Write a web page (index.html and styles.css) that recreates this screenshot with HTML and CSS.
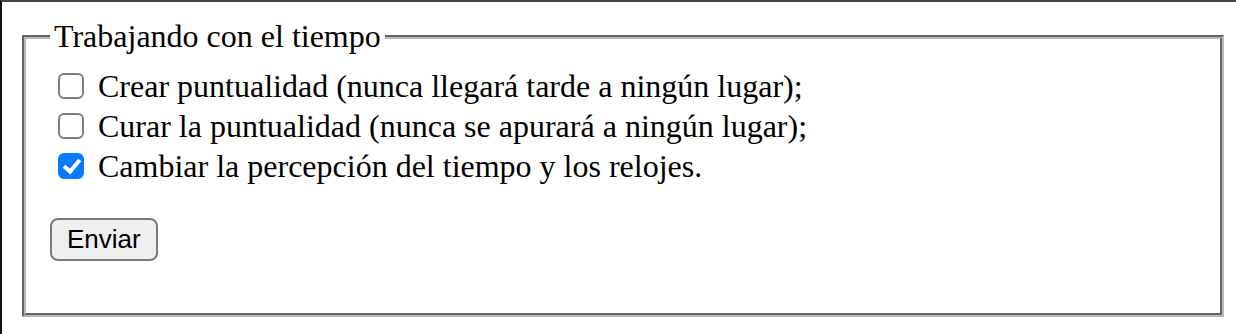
FILE: index.html
```html
<!DOCTYPE html>
<html lang="es">
<head>
<meta charset="utf-8">
<title>Trabajando con el tiempo</title>
<link rel="stylesheet" href="styles.css">
</head>
<body>
<div class="frame">
  <form class="form">
    <fieldset class="group">
      <legend class="group-title">Trabajando con el tiempo</legend>
      <label class="option"><input class="check" type="checkbox" name="t1"> <span class="option-text">Crear puntualidad (nunca llegará tarde a ningún lugar);</span></label>
      <label class="option"><input class="check" type="checkbox" name="t2"> <span class="option-text">Curar la puntualidad (nunca se apurará a ningún lugar);</span></label>
      <label class="option"><input class="check" type="checkbox" name="t3" checked> <span class="option-text">Cambiar la percepción del tiempo y los relojes.</span></label>
      <button class="submit" type="submit">Enviar</button>
    </fieldset>
  </form>
</div>
</body>
</html>
```
FILE: styles.css
```css
html, body {
  margin: 0;
  padding: 0;
  background: #fff;
}

.frame {
  box-sizing: border-box;
  width: 1236px;
  height: 334px;
  border-top: 2px solid #444;
  border-left: 2px solid #111;
  padding: 16px 0 0 20px;
  overflow: hidden;
}

.form {
  margin: 0;
}

.group {
  box-sizing: border-box;
  width: 1202px;
  margin: 0;
  padding: 11px 24px 52px 24px;
  border: 4px groove #b8b8b8;
  font-family: "Liberation Serif", "Times New Roman", serif;
  font-size: 32px;
  color: #000;
}

.group-title {
  padding: 0 4px;
  font-size: 32px;
}

.option {
  display: flex;
  align-items: center;
  height: 40px;
  line-height: 40px;
  white-space: pre;
}

.check {
  appearance: none;
  -webkit-appearance: none;
  position: relative;
  box-sizing: border-box;
  width: 26px;
  height: 26px;
  margin: 0 6px 0 8px;
  border: 2px solid #7d7d7d;
  border-radius: 6px;
  background: #fff;
  flex: none;
}

.check:checked {
  border-color: #0a7bff;
  background: #0a7bff;
}

.check:checked::after {
  content: "";
  position: absolute;
  left: 7px;
  top: 1px;
  width: 6px;
  height: 13px;
  border-right: 4px solid #fff;
  border-bottom: 4px solid #fff;
  transform: rotate(40deg);
}

.option-text {
  margin-left: 8px;
}

.submit {
  display: block;
  box-sizing: border-box;
  height: 43px;
  margin: 32px 0 0 0;
  padding: 0 15px;
  border: 2px solid #7a7a7a;
  border-radius: 8px;
  background: #efefef;
  font-family: "Liberation Sans", Arial, sans-serif;
  font-size: 26px;
  color: #000;
}
```
